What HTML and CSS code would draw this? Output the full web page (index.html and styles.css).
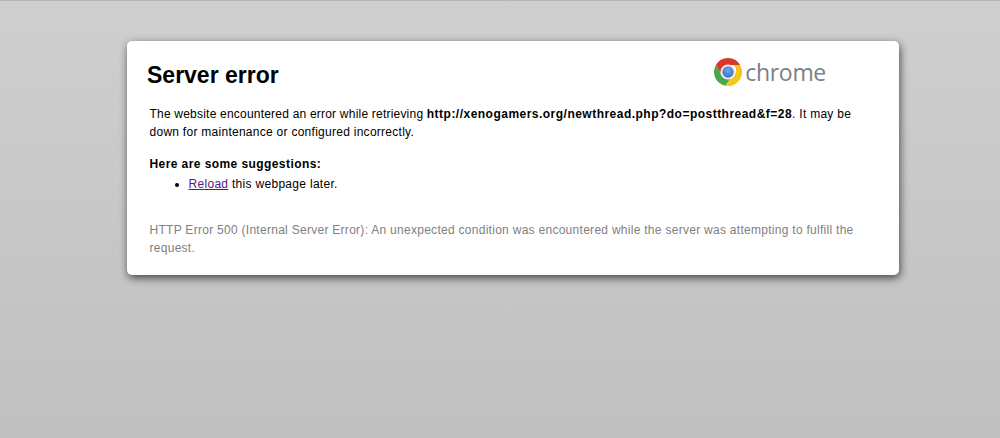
FILE: index.html
```html
<!DOCTYPE html>
<html lang="en">
<head>
<meta charset="utf-8">
<title>Server error</title>
<link rel="stylesheet" href="styles.css">
</head>
<body>
<main class="card">
  <header class="head">
    <h1 class="title">Server error</h1>
    <div class="logo">
      <svg class="logo-icon" viewBox="0 0 28 28" width="28" height="28" aria-hidden="true">
        <defs>
          <radialGradient id="blue" cx="50%" cy="35%" r="70%">
            <stop offset="0" stop-color="#6fa8e6"/>
            <stop offset="1" stop-color="#2f6fc4"/>
          </radialGradient>
        </defs>
        <path fill="#d8352b" d="M14 0a14 14 0 0 1 12.12 7L14 7a7 7 0 0 0-6.6 9.3L1.9 7A14 14 0 0 1 14 0z"/>
        <path fill="#4ba84a" d="M1.9 7 7.4 16.3A7 7 0 0 0 16.5 20.5L11.5 27.8A14 14 0 0 1 1.9 7z"/>
        <path fill="#f5c71d" d="M26.12 7A14 14 0 0 1 11.5 27.8L18.5 18.5A7 7 0 0 0 19.5 7z"/>
        <circle cx="14" cy="14" r="7.6" fill="#efefef"/>
        <circle cx="14" cy="14" r="5.7" fill="url(#blue)"/>
      </svg>
      <span class="logo-text">chrome</span>
    </div>
  </header>
  <p class="message">The website encountered an error while retrieving <strong class="url">http://xenogamers.org/newthread.php?do=postthread&amp;f=28</strong><span class="tail">. It may be down for maintenance or configured incorrectly.</span></p>
  <h2 class="suggest">Here are some suggestions:</h2>
  <ul class="list">
    <li><a class="link" href="#">Reload</a> this webpage later.</li>
  </ul>
  <p class="detail">HTTP Error 500 (Internal Server Error): An unexpected condition was encountered while the server was attempting to fulfill the request.</p>
</main>
</body>
</html>
```
FILE: styles.css
```css
html, body {
  margin: 0;
  height: 100%;
}
body {
  box-sizing: border-box;
  height: 438px;
  overflow: hidden;
  padding: 40px 0 0 127px;
  border-top: 1px solid #b5b5b5;
  background: linear-gradient(#cfcfcf, #c0c0c0);
  font-family: "Liberation Sans", Arial, sans-serif;
  font-size: 12px;
  line-height: 18px;
  color: #000;
}
.card {
  box-sizing: border-box;
  width: 772px;
  height: 234px;
  padding: 15px 22.5px 0;
  background: #fff;
  border-radius: 5px;
  box-shadow: 1px 3px 9px rgba(0, 0, 0, 0.65);
}
.head {
  display: flex;
  height: 40px;
  justify-content: space-between;
  margin-left: -2.5px;
}
.title {
  margin: 4px 0 0;
  font-size: 23px;
  line-height: 30px;
  font-weight: bold;
}
.logo {
  display: flex;
  align-items: center;
  gap: 3px;
  height: 28px;
  margin: 2px 50.5px 0 0;
}
.logo-icon {
  display: block;
}
.logo-text {
  font-family: "Open Sans", sans-serif;
  font-size: 23px;
  line-height: 28px;
  color: #7c7f83;
  letter-spacing: -0.3px;
}
.message {
  margin: 9px 0 0;
  letter-spacing: 0.21px;
}
.url {
  letter-spacing: 0.48px;
}
.tail {
  letter-spacing: 0.27px;
}
.suggest {
  margin: 14px 0 0;
  font-size: 12px;
  line-height: 18px;
  font-weight: bold;
  letter-spacing: 0.42px;
}
.list {
  margin: 2px 0 0;
  padding: 0 0 0 39px;
  letter-spacing: 0.3px;
}
.link {
  color: #551a8b;
}
.detail {
  margin: 28px 0 0;
  color: #808080;
  letter-spacing: 0.28px;
}
```
